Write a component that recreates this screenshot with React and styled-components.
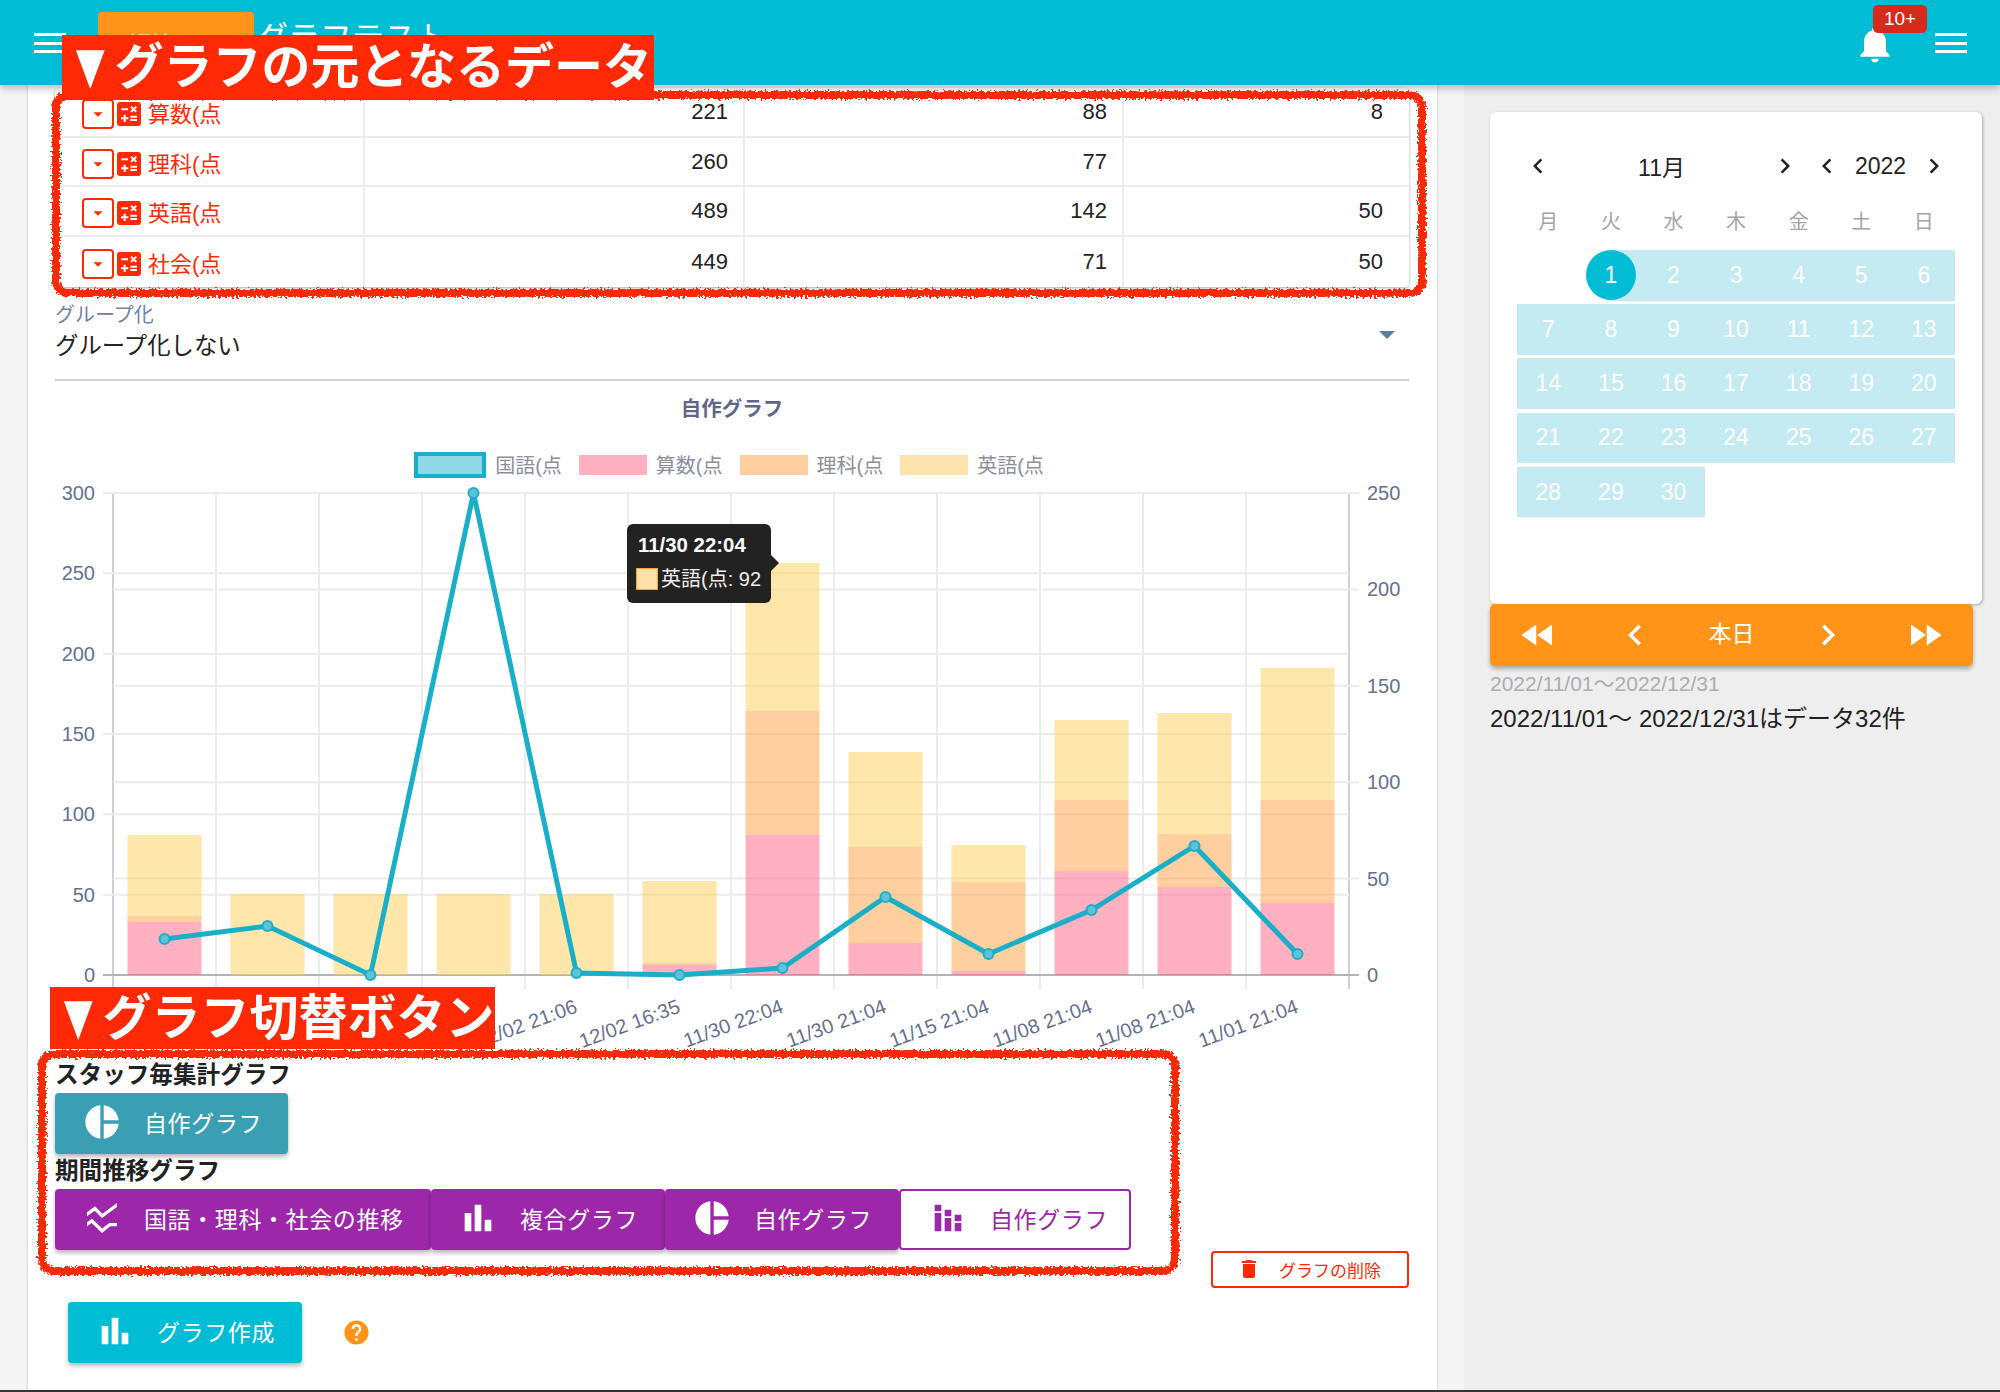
import React from "react";
import styled, { createGlobalStyle } from "styled-components";
import {
  MdNotifications,
  MdArrowDropDown,
  MdArrowDropUp,
  MdCalculate,
  MdChevronLeft,
  MdChevronRight,
  MdFastRewind,
  MdFastForward,
  MdPieChart,
  MdBarChart,
  MdStackedBarChart,
  MdSsidChart,
  MdDelete,
  MdHelp,
} from "react-icons/md";

const FONT = '"Liberation Sans", "Noto Sans CJK JP", sans-serif';
const RED = "#ff2a05";
const CYAN = "#00bcd4";
const ORANGE = "#ff9419";
const PURPLE = "#9c27a8";

const GlobalStyle = createGlobalStyle`
  html, body {
    margin: 0;
    padding: 0;
    background: #f5f5f5;
  }
  * {
    box-sizing: border-box;
  }
  body {
    font-family: ${FONT};
    color: #222;
  }
`;

const tableRows = [
  ["算数(点", "221", "88", "8"],
  ["理科(点", "260", "77", ""],
  ["英語(点", "489", "142", "50"],
  ["社会(点", "449", "71", "50"],
];

const weekDays = ["月", "火", "水", "木", "金", "土", "日"];
const calendarWeeks = [
  [null, 1, 2, 3, 4, 5, 6],
  [7, 8, 9, 10, 11, 12, 13],
  [14, 15, 16, 17, 18, 19, 20],
  [21, 22, 23, 24, 25, 26, 27],
  [28, 29, 30],
];

const AXIS_BOTTOM = 975;
const AXIS_TOP = 493;
const AXIS_LEFT = 113;
const AXIS_RIGHT = 1349;
const CAT_WIDTH = 103;

// tops of the stacked segments, in picture pixels: pink, orange, yellow
const bars = [
  [922, 916, 835],
  [975, 975, 894],
  [975, 975, 894],
  [975, 975, 894],
  [975, 975, 894],
  [965, 963, 881],
  [835, 711, 563],
  [943, 847, 752],
  [971, 882, 845],
  [871, 800, 720],
  [887, 834, 713],
  [903, 800, 668],
];
const linePoints = [939, 926, 975, 493, 973, 975, 968, 897, 954, 910, 846, 954];
const xLabels = {
  4: "12/02 21:06",
  5: "12/02 16:35",
  6: "11/30 22:04",
  7: "11/30 21:04",
  8: "11/15 21:04",
  9: "11/08 21:04",
  10: "11/08 21:04",
  11: "11/01 21:04",
};

const catCenter = (i) => AXIS_LEFT + CAT_WIDTH * (i + 0.5);

const Chart = () => {
  const leftTicks = [300, 250, 200, 150, 100, 50, 0];
  const rightTicks = [250, 200, 150, 100, 50, 0];
  const leftY = (v) => AXIS_BOTTOM - ((AXIS_BOTTOM - AXIS_TOP) * v) / 300;
  const rightY = (v) => AXIS_BOTTOM - ((AXIS_BOTTOM - AXIS_TOP) * v) / 250;
  const line = linePoints.map((y, i) => `${catCenter(i)},${y}`).join(" ");
  const barW = 74;

  return (
    <svg width="1355" height="580" viewBox="55 480 1355 580" style={{ display: "block" }}>
      {Array.from({ length: 13 }).map((_, i) => (
        <line
          key={i}
          x1={AXIS_LEFT + CAT_WIDTH * i}
          x2={AXIS_LEFT + CAT_WIDTH * i}
          y1={AXIS_TOP}
          y2={989}
          stroke={i === 0 || i === 12 ? "#cfcfcf" : "#ececec"}
          strokeWidth="2"
        />
      ))}
      {leftTicks.map((v) => (
        <g key={v}>
          <line x1="103" x2={AXIS_RIGHT} y1={leftY(v)} y2={leftY(v)} stroke={v === 0 ? "#b4b4b8" : "#ececec"} strokeWidth="2" />
          <text x="95" y={leftY(v) + 7} textAnchor="end" fontSize="20" fill="#66708f" fontFamily={FONT}>
            {v}
          </text>
        </g>
      ))}
      {rightTicks.map((v) => (
        <g key={v}>
          <line x1={AXIS_LEFT} x2="1359" y1={rightY(v)} y2={rightY(v)} stroke={v === 0 ? "#b4b4b8" : "#ececec"} strokeWidth="2" />
          <text x="1367" y={rightY(v) + 7} fontSize="20" fill="#66708f" fontFamily={FONT}>
            {v}
          </text>
        </g>
      ))}
      {bars.map(([pink, orange, yellow], i) => {
        const x = catCenter(i) - barW / 2;
        return (
          <g key={i}>
            <rect x={x} y={pink} width={barW} height={AXIS_BOTTOM - pink} fill="rgba(255,99,132,.5)" />
            <rect x={x} y={orange} width={barW} height={pink - orange} fill="rgba(255,159,64,.5)" />
            <rect x={x} y={yellow} width={barW} height={orange - yellow} fill="rgba(255,205,86,.5)" />
          </g>
        );
      })}
      <polyline points={line} fill="none" stroke="#1aafc8" strokeWidth="5" />
      {linePoints.map((y, i) => (
        <circle key={i} cx={catCenter(i)} cy={y} r="5" fill="#5cc4d6" stroke="#1aafc8" strokeWidth="2" />
      ))}
      {Object.entries(xLabels).map(([i, label]) => (
        <text
          key={i}
          transform={`translate(${catCenter(Number(i)) + 2} 1012) rotate(-20)`}
          textAnchor="end"
          fontSize="20"
          fill="#66708f"
          fontFamily={FONT}
        >
          {label}
        </text>
      ))}
    </svg>
  );
};

const App = () => (
  <>
    <GlobalStyle />
    <svg width="0" height="0" style={{ position: "absolute" }}>
      <filter id="rough" x="-2%" y="-5%" width="104%" height="110%" colorInterpolationFilters="sRGB">
        <feTurbulence type="fractalNoise" baseFrequency="0.45" numOctaves="2" seed="3" />
        <feDisplacementMap in="SourceGraphic" scale="7" xChannelSelector="R" yChannelSelector="G" />
      </filter>
    </svg>
    <Page>
      <Header>
        <HeaderLeft>
          <MenuIcon />
          <ShortenButton>
            短縮
            <MdArrowDropUp size={44} />
          </ShortenButton>
          <PageTitle>グラフテスト</PageTitle>
        </HeaderLeft>
        <HeaderRight>
          <BellWrap>
            <MdNotifications size={44} color="#fff" />
            <Badge>10+</Badge>
          </BellWrap>
          <MenuIcon />
        </HeaderRight>
      </Header>

      <Body>
        <Main>
          <DataTable>
            {tableRows.map(([name, a, b, c]) => (
              <Row key={name}>
                <NameCell>
                  <ExpandButton>
                    <MdArrowDropDown size={22} />
                  </ExpandButton>
                  <MdCalculate size={32} />
                  <span>{name}</span>
                </NameCell>
                <NumCell>{a}</NumCell>
                <NumCell>{b}</NumCell>
                <NumCell>{c}</NumCell>
              </Row>
            ))}
          </DataTable>

          <SelectBlock>
            <SelectLabel>グループ化</SelectLabel>
            <SelectValue>
              グループ化しない
              <Caret />
            </SelectValue>
          </SelectBlock>

          <ChartTitle>自作グラフ</ChartTitle>
          <Legend>
            <LegendItem>
              <LegendBox $color="#8fd7e4" $border="#1aafc8" />
              国語(点
            </LegendItem>
            <LegendItem>
              <LegendBox $color="#ffb1c1" />
              算数(点
            </LegendItem>
            <LegendItem>
              <LegendBox $color="#ffcf9f" />
              理科(点
            </LegendItem>
            <LegendItem>
              <LegendBox $color="#fde3ac" />
              英語(点
            </LegendItem>
          </Legend>
          <ChartWrap>
            <Chart />
            <Tooltip>
              <TooltipTitle>11/30 22:04</TooltipTitle>
              <TooltipRow>
                <TooltipSwatch />
                英語(点: 92
              </TooltipRow>
            </Tooltip>
          </ChartWrap>

          <SectionTitle>スタッフ毎集計グラフ</SectionTitle>
          <ButtonRow>
            <GraphButton $bg="#3a9fb3" $w={233}>
              <MdPieChart size={40} />
              自作グラフ
            </GraphButton>
          </ButtonRow>
          <SectionTitle $gap={2}>期間推移グラフ</SectionTitle>
          <ButtonRow>
            <GraphButton $bg={PURPLE} $w={376}>
              <MdSsidChart size={40} />
              国語・理科・社会の推移
            </GraphButton>
            <GraphButton $bg={PURPLE} $w={234}>
              <MdBarChart size={40} />
              複合グラフ
            </GraphButton>
            <GraphButton $bg={PURPLE} $w={234}>
              <MdPieChart size={40} />
              自作グラフ
            </GraphButton>
            <GraphButton $outline $w={232}>
              <MdStackedBarChart size={40} />
              自作グラフ
            </GraphButton>
          </ButtonRow>
          <DeleteRow>
            <DeleteButton>
              <MdDelete size={24} />
              グラフの削除
            </DeleteButton>
          </DeleteRow>
          <CreateRow>
            <GraphButton $bg={CYAN} $w={234}>
              <MdBarChart size={40} />
              グラフ作成
            </GraphButton>
            <MdHelp size={29} color={ORANGE} />
          </CreateRow>
        </Main>

        <Side>
          <CalendarCard>
            <CalendarHead>
              <MonthPicker>
                <MdChevronLeft size={30} />
                <span>11月</span>
                <MdChevronRight size={30} />
              </MonthPicker>
              <YearPicker>
                <MdChevronLeft size={30} />
                <span>2022</span>
                <MdChevronRight size={30} />
              </YearPicker>
            </CalendarHead>
            <WeekRow>
              {weekDays.map((d) => (
                <WeekDay key={d}>{d}</WeekDay>
              ))}
            </WeekRow>
            <Weeks>
              {calendarWeeks.map((week, w) => (
                <Week key={w}>
                  {week.map((day, i) => (
                    <Day key={i} $empty={day === null} $selected={day === 1}>
                      {day}
                    </Day>
                  ))}
                </Week>
              ))}
            </Weeks>
          </CalendarCard>
          <CalendarNav>
            <MdFastRewind size={42} />
            <MdChevronLeft size={42} />
            <NavToday>本日</NavToday>
            <MdChevronRight size={42} />
            <MdFastForward size={42} />
          </CalendarNav>
          <RangeText>2022/11/01〜2022/12/31</RangeText>
          <CountText>2022/11/01〜 2022/12/31はデータ32件</CountText>
        </Side>
      </Body>
      <BottomEdge />

      <LabelOne>
        <LabelMark>▼</LabelMark>グラフの元となるデータ
      </LabelOne>
      <FrameOne />
      <LabelTwo>
        <LabelMark>▼</LabelMark>グラフ切替ボタン
      </LabelTwo>
      <FrameTwo />
    </Page>
  </>
);

const Page = styled.div`
  position: relative;
  width: 2000px;
  height: 1392px;
  overflow: hidden;
  display: flex;
  flex-direction: column;
`;

const Header = styled.header`
  position: relative;
  z-index: 2;
  flex: none;
  height: 85px;
  background: ${CYAN};
  box-shadow: 0 3px 8px rgba(0, 0, 0, 0.28);
  display: flex;
  justify-content: space-between;
  padding: 0 33px 0 34px;
`;

const HeaderLeft = styled.div`
  display: flex;
  align-items: flex-start;
`;

const HeaderRight = styled.div`
  display: flex;
  align-items: flex-start;
  gap: 38px;
`;

const MenuIcon = styled.span`
  display: block;
  width: 32px;
  height: 20px;
  margin-top: 33px;
  border-top: 3px solid #fff;
  border-bottom: 3px solid #fff;
  position: relative;
  &::after {
    content: "";
    position: absolute;
    left: 0;
    right: 0;
    top: 5.5px;
    height: 3px;
    background: #fff;
  }
`;

const ShortenButton = styled.div`
  margin: 12px 0 0 32px;
  width: 156px;
  height: 60px;
  border-radius: 4px;
  background: ${ORANGE};
  color: #fff;
  font-size: 22px;
  display: flex;
  align-items: center;
  justify-content: center;
  gap: 6px;
`;

const PageTitle = styled.div`
  margin: 18px 0 0 2px;
  font-size: 32px;
  line-height: 40px;
  color: #fff;
`;

const BellWrap = styled.div`
  position: relative;
  width: 44px;
  margin-top: 22px;
`;

const Badge = styled.span`
  position: absolute;
  left: 20px;
  top: -17px;
  width: 54px;
  height: 28px;
  border-radius: 5px;
  background: #d62a1a;
  color: #fff;
  font-size: 19px;
  line-height: 28px;
  text-align: center;
`;

const Body = styled.div`
  flex: 1;
  min-height: 0;
  display: flex;
  padding-left: 28px;
`;

const Main = styled.main`
  width: 1409px;
  background: #fff;
  box-shadow: 0 0 3px rgba(0, 0, 0, 0.2);
  padding: 3px 28px 0 27px;
`;

const DataTable = styled.div`
  border-radius: 4px;
  box-shadow: 0 1px 3px rgba(0, 0, 0, 0.35);
`;

const Row = styled.div`
  display: grid;
  grid-template-columns: 310px 380px 379px 285px;
  height: 49.7px;
  border-bottom: 2px solid #ececec;
  &:last-child {
    border-bottom: none;
  }
`;

const NameCell = styled.div`
  display: flex;
  align-items: center;
  padding-left: 27px;
  color: ${RED};
  font-size: 22px;
  white-space: nowrap;
  border-right: 2px solid #ececec;
  span {
    margin-left: 6px;
  }
  > svg {
    margin: 4px -3px 0 -1px;
  }
`;

const ExpandButton = styled.span`
  display: flex;
  align-items: center;
  justify-content: center;
  width: 32px;
  height: 30px;
  margin: 4px 0 0 0 !important;
  border: 2px solid ${RED};
  border-radius: 4px;
`;

const NumCell = styled.div`
  display: flex;
  align-items: center;
  justify-content: flex-end;
  padding-right: 15px;
  font-size: 22px;
  border-right: 2px solid #ececec;
  &:last-child {
    border-right: none;
    padding-right: 26px;
  }
`;

const SelectBlock = styled.div`
  height: 94px;
  padding-top: 15px;
  border-bottom: 2px solid #d2d2d2;
`;

const SelectLabel = styled.div`
  font-size: 20px;
  line-height: 26px;
  color: #6f83a8;
`;

const SelectValue = styled.div`
  position: relative;
  margin-top: 2px;
  font-size: 23.4px;
  line-height: 32px;
`;

const Caret = styled.span`
  position: absolute;
  right: 14px;
  top: 1px;
  border-left: 8px solid transparent;
  border-right: 8px solid transparent;
  border-top: 8px solid #5d7f9f;
`;

const ChartTitle = styled.div`
  margin-top: 15px;
  font-size: 20.5px;
  line-height: 26px;
  font-weight: 700;
  text-align: center;
  color: #62668a;
`;

const Legend = styled.div`
  margin-top: 29px;
  padding-right: 6px;
  height: 28px;
  display: flex;
  justify-content: center;
  gap: 17px;
`;

const LegendItem = styled.div`
  display: flex;
  align-items: center;
  gap: 9px;
  font-size: 20px;
  color: #8b8f9c;
`;

const LegendBox = styled.span`
  display: block;
  width: ${(p) => (p.$border ? "72px" : "68px")};
  height: ${(p) => (p.$border ? "26px" : "20px")};
  background: ${(p) => p.$color};
  border: ${(p) => (p.$border ? `4px solid ${p.$border}` : "none")};
`;

const ChartWrap = styled.div`
  position: relative;
  height: 580px;
  margin-top: 1px;
`;

const Tooltip = styled.div`
  position: absolute;
  left: 572px;
  top: 44px;
  width: 144px;
  height: 79px;
  padding: 9px 9px;
  background: #222;
  border-radius: 6px;
  color: #fff;
  &::after {
    content: "";
    position: absolute;
    right: -8px;
    top: 31px;
    border-top: 8px solid transparent;
    border-bottom: 8px solid transparent;
    border-left: 8px solid #222;
  }
`;

const TooltipTitle = styled.div`
  font-size: 20.4px;
  line-height: 24px;
  font-weight: 700;
  padding-left: 2px;
  white-space: nowrap;
`;

const TooltipRow = styled.div`
  display: flex;
  align-items: center;
  gap: 3px;
  margin-top: 10px;
  font-size: 20px;
  line-height: 24px;
  white-space: nowrap;
  color: #eee;
`;

const TooltipSwatch = styled.span`
  display: block;
  width: 22px;
  height: 22px;
  background: #ffe0a6;
  border: 1px solid #ff9f40;
`;

const SectionTitle = styled.div`
  margin-top: ${(p) => p.$gap || 0}px;
  font-size: 23.6px;
  line-height: 30px;
  font-weight: 700;
  color: #222;
`;

const ButtonRow = styled.div`
  display: flex;
  margin-top: 3px;
`;

const GraphButton = styled.div`
  width: ${(p) => p.$w}px;
  height: 61px;
  display: flex;
  align-items: center;
  gap: 22px;
  padding: 0 0 3px 27px;
  border-radius: 4px;
  font-size: 23px;
  letter-spacing: 0.6px;
  white-space: nowrap;
  color: ${(p) => (p.$outline ? PURPLE : "#fff")};
  background: ${(p) => (p.$outline ? "#fff" : p.$bg)};
  border: ${(p) => (p.$outline ? `2px solid ${PURPLE}` : "none")};
  box-shadow: ${(p) => (p.$outline ? "none" : "0 3px 4px rgba(0, 0, 0, 0.28)")};
`;

const DeleteRow = styled.div`
  display: flex;
  justify-content: flex-end;
  margin-top: 1px;
`;

const DeleteButton = styled.div`
  width: 198px;
  height: 37px;
  display: flex;
  align-items: center;
  gap: 18px;
  padding-left: 24px;
  border: 2px solid ${RED};
  border-radius: 4px;
  color: ${RED};
  font-size: 17px;
  white-space: nowrap;
`;

const CreateRow = styled.div`
  display: flex;
  align-items: center;
  gap: 40px;
  margin: 14px 0 0 13px;
`;

const Side = styled.aside`
  margin-left: 27px;
  flex: 1;
  background: #eee;
  padding: 27px 18px 0 26px;
`;

const CalendarCard = styled.section`
  height: 492px;
  background: #fff;
  border-radius: 6px;
  box-shadow: 1px 1px 3px rgba(0, 0, 0, 0.3);
  padding: 33px 27px 0;
`;

const CalendarHead = styled.div`
  display: flex;
  height: 42px;
  align-items: center;
  font-size: 23px;
  color: #222;
`;

const MonthPicker = styled.div`
  width: 286px;
  display: flex;
  align-items: center;
  justify-content: space-between;
  padding: 0 3px 0 6px;
`;

const YearPicker = styled.div`
  flex: 1;
  display: flex;
  align-items: center;
  justify-content: space-between;
  padding: 0 6px 0 9px;
`;

const WeekRow = styled.div`
  display: grid;
  grid-template-columns: repeat(7, 1fr);
  margin-top: 20px;
  height: 43px;
`;

const WeekDay = styled.div`
  text-align: center;
  font-size: 20px;
  line-height: 30px;
  color: #a8a2a8;
`;

const Weeks = styled.div`
  display: flex;
  flex-direction: column;
  gap: 3.7px;
`;

const Week = styled.div`
  display: grid;
  grid-template-columns: repeat(7, 62.6px);
`;

const Day = styled.div`
  position: relative;
  height: 50.5px;
  display: flex;
  align-items: center;
  justify-content: center;
  font-size: 23px;
  color: #fff;
  background: ${(p) => (p.$empty ? "transparent" : "#c4eaf2")};
  z-index: 0;
  ${(p) =>
    p.$selected &&
    `
    &::before {
      content: "";
      position: absolute;
      z-index: -1;
      left: 6px;
      width: 50px;
      height: 50px;
      border-radius: 50%;
      background: ${CYAN};
    }
    background: linear-gradient(to right, transparent 31px, #c4eaf2 31px);
  `}
`;

const CalendarNav = styled.nav`
  height: 62px;
  width: 483px;
  display: grid;
  grid-template-columns: repeat(5, 1fr);
  justify-items: center;
  align-items: center;
  background: ${ORANGE};
  color: #fff;
  border-radius: 5px;
  font-size: 23px;
  box-shadow: 0 3px 4px rgba(0, 0, 0, 0.28);
  position: relative;
`;

const NavToday = styled.span`
  padding-bottom: 6px;
`;

const RangeText = styled.div`
  margin-top: 4px;
  font-size: 21px;
  line-height: 28px;
  color: #b0a9b2;
`;

const CountText = styled.div`
  margin-top: 7px;
  font-size: 24px;
  line-height: 28px;
  white-space: nowrap;
  color: #222;
`;

const BottomEdge = styled.div`
  flex: none;
  height: 2px;
  background: #333;
`;

const LabelOne = styled.div`
  position: absolute;
  z-index: 3;
  left: 62px;
  top: 35px;
  width: 592px;
  height: 65px;
  background: ${RED};
  color: #fff;
  font-size: 49px;
  line-height: 65px;
  font-weight: 700;
  white-space: nowrap;
  padding-left: 4px;
`;

const LabelMark = styled.span`
  display: inline-block;
  transform: scaleY(1.35);
  transform-origin: 50% 60%;
`;

const LabelTwo = styled(LabelOne)`
  left: 50px;
  top: 987px;
  width: 445px;
  height: 62px;
  line-height: 62px;
`;

const FrameOne = styled.div`
  position: absolute;
  z-index: 2;
  left: 52px;
  top: 91px;
  width: 1374px;
  height: 206px;
  border: 8px solid ${RED};
  border-radius: 16px;
  filter: url(#rough);
`;

const FrameTwo = styled(FrameOne)`
  left: 38px;
  top: 1050px;
  width: 1141px;
  height: 225px;
`;

export default App;
